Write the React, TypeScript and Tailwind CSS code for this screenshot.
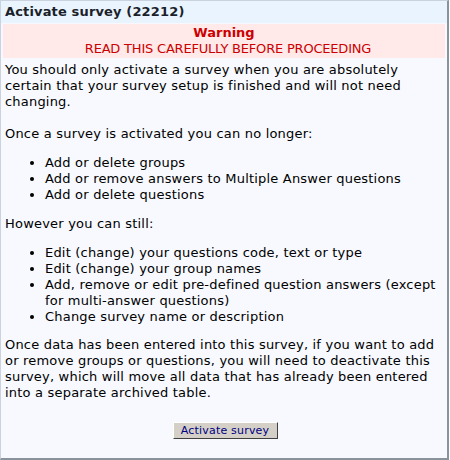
export default function App() {
  const font = { fontFamily: '"DejaVu Sans", Verdana, sans-serif' };

  return (
    <div
      className="w-[449px] h-[460px] bg-[#f7f9fe] border-t border-l border-t-[#c9d2de] border-l-[#c9d2de] border-r-2 border-b-2 border-r-[#8a929c] border-b-[#8a929c] flex flex-col text-black"
      style={font}
    >
      <div className="h-[22px] bg-[#eaf4ff] px-1 flex items-center text-[13px] tracking-[0.15px] font-bold text-[#1b1f2a]">
        Activate survey (22212)
      </div>

      <div className="mx-[2px] mt-[1px] h-[34px] bg-[#ffe9e9] flex flex-col items-center justify-center text-[#cc0000] text-[13px] leading-[16px]">
        <strong>Warning</strong>
        <span className="tracking-[-0.2px] pl-2">READ THIS CAREFULLY BEFORE PROCEEDING</span>
      </div>

      <div className="pl-1 pr-[2px] pt-[4px] text-[13px] tracking-[0.2px] leading-[16px]">
        <p>
          You should only activate a survey when you are absolutely certain that your survey setup is finished and
          will not need changing.
          <br />
          <br />
          Once a survey is activated you can no longer:
        </p>
        <ul className="list-disc pl-10 my-[12.5px]">
          <li>Add or delete groups</li>
          <li>Add or remove answers to Multiple Answer questions</li>
          <li>Add or delete questions</li>
        </ul>
        <p className="pt-[1px]">However you can still:</p>
        <ul className="list-disc pl-10 my-[12.5px]">
          <li>Edit (change) your questions code, text or type</li>
          <li>Edit (change) your group names</li>
          <li>Add, remove or edit pre-defined question answers (except for multi-answer questions)</li>
          <li>Change survey name or description</li>
        </ul>
        <p>
          Once data has been entered into this survey, if you want to add or remove groups or questions, you will need
          to deactivate this survey, which will move all data that has already been entered into a separate archived
          table.
        </p>
        <div className="flex justify-center mt-[21px]">
          <button className="w-[105px] h-[17px] bg-[#d4d0c8] border border-t-white border-l-white border-r-[#404040] border-b-[#404040] text-[11px] tracking-[0.2px] leading-none text-[#000080]">
            Activate survey
          </button>
        </div>
      </div>
    </div>
  );
}
